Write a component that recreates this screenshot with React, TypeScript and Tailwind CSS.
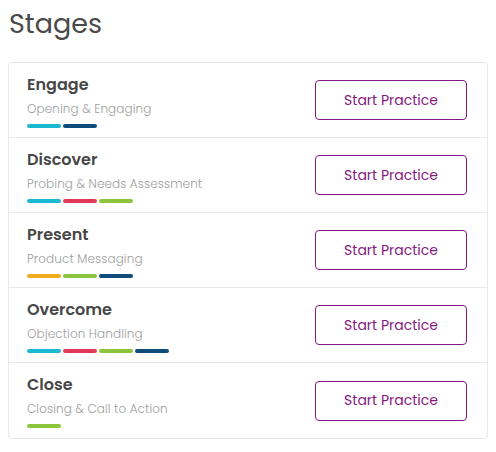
import React from 'react';

// Stage list with colored skill bars
interface Stage {
  title: string;
  subtitle: string;
  bars: string[];
}

const stages: Stage[] = [
  { title: 'Engage', subtitle: 'Opening & Engaging', bars: ['bg-[#1bb8d2]', 'bg-[#0f4b7b]'] },
  { title: 'Discover', subtitle: 'Probing & Needs Assessment', bars: ['bg-[#1bb8d2]', 'bg-[#e03b5c]', 'bg-[#8cc43c]'] },
  { title: 'Present', subtitle: 'Product Messaging', bars: ['bg-[#f1ab1e]', 'bg-[#8cc43c]', 'bg-[#0f4b7b]'] },
  { title: 'Overcome', subtitle: 'Objection Handling', bars: ['bg-[#1bb8d2]', 'bg-[#e03b5c]', 'bg-[#8cc43c]', 'bg-[#0f4b7b]'] },
  { title: 'Close', subtitle: 'Closing & Call to Action', bars: ['bg-[#8cc43c]'] },
];

function StageRow({ stage, last }: { stage: Stage; last: boolean }) {
  return (
    <div className={`flex h-[75px] items-center justify-between pl-[18px] pr-[20px] ${last ? '' : 'border-b border-[#e8e8e8]'}`}>
      <div className="flex flex-col pt-[2px]">
        <div className="text-[16px] font-semibold leading-[20px] text-[#474747]">{stage.title}</div>
        <div className="mt-[6px] text-[12px] font-light leading-[16px] tracking-[0.1px] text-[#9e9e9e]">{stage.subtitle}</div>
        <div className="mt-[7px] flex gap-[2px]">
          {stage.bars.map((c, i) => (
            <div key={i} className={`h-[4px] w-[34px] rounded-full ${c}`} />
          ))}
        </div>
      </div>
      <button className="h-[40px] w-[152px] rounded-[4px] border border-[#86177f] text-[14px] text-[#86177f]">
        Start Practice
      </button>
    </div>
  );
}

export default function App() {
  return (
    <div className="min-h-screen bg-white px-[8px] pt-[6px] font-['Poppins','Inter',sans-serif]">
      <h1 className="pl-[1px] text-[27px] leading-[36px] text-[#4a4a4a]">Stages</h1>
      <div className="mt-[20px] w-[480px] rounded-[4px] border border-[#e8e8e8]">
        {stages.map((s, i) => (
          <StageRow key={s.title} stage={s} last={i === stages.length - 1} />
        ))}
      </div>
    </div>
  );
}
